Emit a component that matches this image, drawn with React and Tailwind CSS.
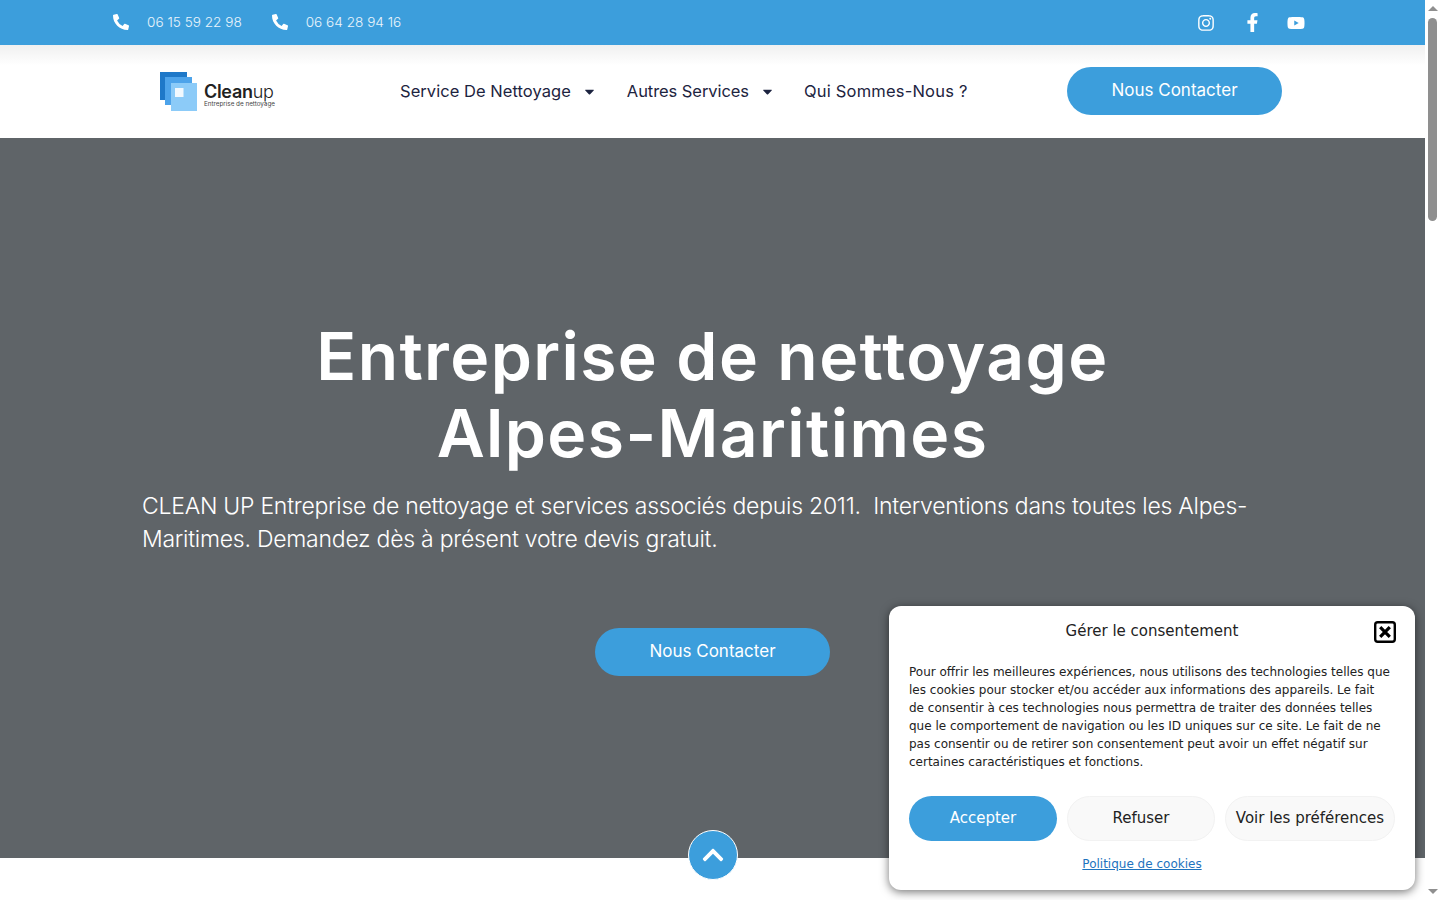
import { FaPhoneAlt, FaInstagram, FaFacebookF, FaYoutube, FaCaretDown, FaChevronUp } from "react-icons/fa";

const Logo = () => (
  <div className="flex items-end w-[115px] h-[39px]">
    <svg width="38" height="39" viewBox="0 0 38 39" className="shrink-0">
      <rect x="0" y="0" width="27" height="28" fill="#1e78c8" />
      <rect x="5" y="5" width="27" height="28" fill="#4da3ea" />
      <rect x="11" y="11" width="26" height="28" fill="#8ccbf8" />
      <rect x="15" y="16" width="8.5" height="9" fill="#f2f9fe" />
    </svg>
    <div className="ml-[6px] font-['Inter',sans-serif] text-[#222]">
      <div className="text-[18px] leading-[20px] font-semibold tracking-[-0.3px] translate-y-[1px]">
        Clean<span className="font-light">up</span>
      </div>
      <div className="text-[6.3px] leading-[7px] mb-[3px] text-[#444] whitespace-nowrap">Entreprise de nettoyage</div>
    </div>
  </div>
);

const NavItem = ({ label, caret, extra }) => (
  <a className={"flex items-center text-[16.5px] text-[#1d2440] whitespace-nowrap " + extra}>
    {label}
    {caret && <FaCaretDown className="ml-[11px] text-[15px] text-[#1d2440]" />}
  </a>
);

const App = () => {
  return (
    <div className="flex h-[900px] overflow-hidden bg-white font-['Inter',sans-serif]">
      <div className="relative flex-1 min-w-0">
        <div className="flex items-center justify-between h-[45px] bg-[#3c9edc] pl-[113px] pr-[120px] text-white">
          <div className="flex items-center gap-[30px] text-[13.6px] font-light text-white/90">
            <span className="flex items-center gap-[18px]">
              <FaPhoneAlt className="text-[16px] text-white" />
              06 15 59 22 98
            </span>
            <span className="flex items-center gap-[18px]">
              <FaPhoneAlt className="text-[16px] text-white" />
              06 64 28 94 16
            </span>
          </div>
          <div className="flex items-center gap-[25px]">
            <FaInstagram className="text-[18px]" />
            <FaFacebookF className="ml-[3px] text-[19px]" />
            <FaYoutube className="text-[18px]" />
          </div>
        </div>

        <header className="flex items-center h-[93px] pb-[1px] pl-[160px] pr-[143px] bg-white bg-gradient-to-b from-[#f0f0f0] to-white to-[22%]">
          <Logo />
          <nav className="flex items-center gap-[30px] ml-[125px]">
            <NavItem label="Service De Nettoyage" caret extra="tracking-[0.05px]" />
            <NavItem label="Autres Services" caret extra="tracking-[-0.07px]" />
            <NavItem label="Qui Sommes-Nous ?" extra="-ml-[1px] tracking-[0.2px]" />
          </nav>
          <a className="ml-auto flex items-center justify-center w-[215px] h-[48px] rounded-full bg-[#3c9edc] text-white text-[17px]">
            Nous Contacter
          </a>
        </header>

        <section className="relative h-[720px] bg-[#5f6468] pt-[180px] text-white">
          <h1 className="text-center text-[66px] leading-[77px] font-semibold tracking-[1.4px]">
            Entreprise de nettoyage
            <br />
            Alpes-Maritimes
          </h1>
          <p className="mt-[18px] ml-[142px] w-[1140px] text-[23px] leading-[33px] font-light tracking-[-0.25px]">
            CLEAN UP Entreprise de nettoyage et services associés depuis 2011.&nbsp; Interventions dans toutes les Alpes-Maritimes. Demandez dès à présent votre devis gratuit.
          </p>
          <div className="flex justify-center mt-[72px]">
            <a className="flex items-center justify-center w-[235px] h-[48px] rounded-full bg-[#3c9edc] text-[17px]">
              Nous Contacter
            </a>
          </div>
          <a className="absolute left-1/2 -translate-x-1/2 -bottom-[22px] flex items-center justify-center w-[50px] h-[50px] rounded-full bg-[#3c9edc] border border-white text-white text-[24px]">
            <FaChevronUp />
          </a>
        </section>

        <div className="absolute left-[889px] top-[606px] w-[526px] h-[284px] rounded-[12px] bg-white px-[20px] font-['DejaVu_Sans',sans-serif] text-[#222] shadow-[0_2px_10px_rgba(0,0,0,0.55)]">
          <div className="relative h-[50px] flex items-center justify-center text-[15px] pt-[1px]">
            Gérer le consentement
            <svg width="22" height="22" viewBox="0 0 22 22" className="absolute -right-[1px] top-[15px]">
              <rect x="1.2" y="1.2" width="19.6" height="19.6" rx="2.5" fill="none" stroke="#000" strokeWidth="2.4" />
              <path d="M6.2 6.2 15.8 15.8M15.8 6.2 6.2 15.8" stroke="#000" strokeWidth="3.2" />
            </svg>
          </div>
          <p className="mt-[7px] w-[482px] text-[12px] leading-[18px]">
            Pour offrir les meilleures expériences, nous utilisons des technologies telles que les cookies pour stocker et/ou accéder aux informations des appareils. Le fait de consentir à ces technologies nous permettra de traiter des données telles que le comportement de navigation ou les ID uniques sur ce site. Le fait de ne pas consentir ou de retirer son consentement peut avoir un effet négatif sur certaines caractéristiques et fonctions.
          </p>
          <div className="flex gap-[10px] mt-[25px] text-[15px]">
            <button className="w-[148px] h-[45px] rounded-full bg-[#3c9edc] text-white">Accepter</button>
            <button className="w-[148px] h-[45px] rounded-full bg-[#f9f9f9] border border-[#f2f2f2]">Refuser</button>
            <button className="w-[170px] h-[45px] rounded-full bg-[#f9f9f9] border border-[#f2f2f2] whitespace-nowrap">Voir les préférences</button>
          </div>
          <div className="flex justify-center pr-[20px] mt-[14px]">
            <a className="text-[12px] text-[#1e73be] underline">Politique de cookies</a>
          </div>
        </div>
      </div>

      <aside className="relative w-[15px] shrink-0 bg-white flex flex-col items-center">
        <div className="mt-[6px] w-0 h-0 border-x-[5px] border-x-transparent border-b-[5px] border-b-[#8f8f8f]" />
        <div className="mt-[7px] w-[9px] h-[203px] rounded-full bg-[#8f8f8f]" />
        <div className="mt-auto mb-[6px] w-0 h-0 border-x-[5px] border-x-transparent border-t-[5px] border-t-[#8f8f8f]" />
      </aside>
    </div>
  );
};

export default App;
